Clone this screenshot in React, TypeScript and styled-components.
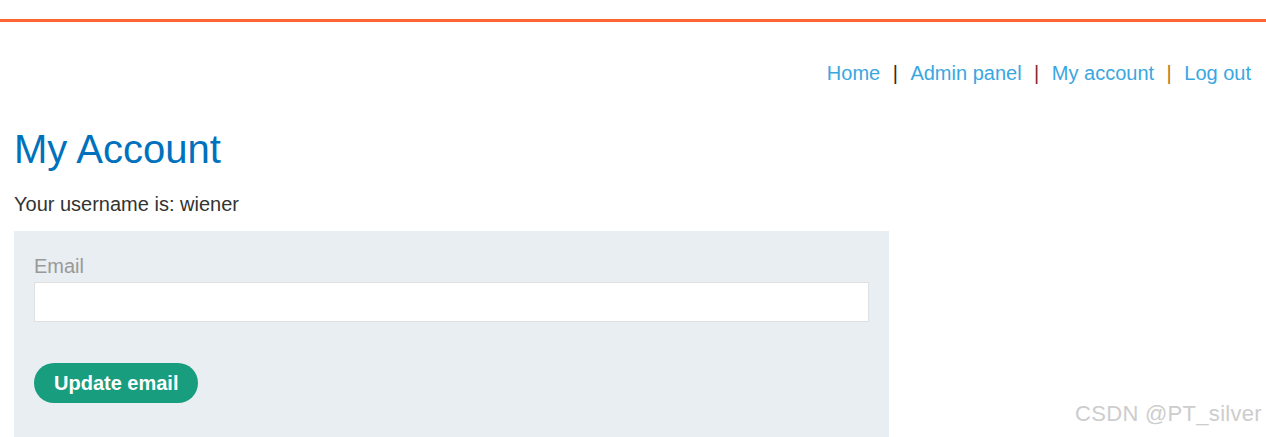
import React from "react";
import styled, { createGlobalStyle } from "styled-components";

const GlobalStyle = createGlobalStyle`
  html, body {
    margin: 0;
    padding: 0;
    background: #ffffff;
    font-family: "Liberation Sans", Arial, sans-serif;
  }
`;

const Page = styled.div`
  position: relative;
  min-height: 437px;
  overflow: hidden;
`;

const TopBar = styled.div`
  height: 19px;
  border-bottom: 3px solid #ff6633;
`;

const Nav = styled.nav`
  display: flex;
  justify-content: flex-end;
  align-items: baseline;
  margin-top: 40px;
  padding-right: 15px;
  font-size: 20px;
  line-height: 23px;
`;

const NavLink = styled.a`
  color: #3aa7e0;
  text-decoration: none;
`;

const Sep = styled.span<{ $color: string }>`
  color: ${(p) => p.$color};
  margin: 0 12.5px;
`;

const Main = styled.main`
  padding: 0 14px;
`;

const Title = styled.h1`
  margin: 41px 0 0;
  font-size: 40px;
  line-height: 46px;
  font-weight: 400;
  color: #0071bc;
`;

const Info = styled.p`
  margin: 21px 0 0;
  font-size: 20px;
  line-height: 23px;
  color: #333332;
`;

const FormPanel = styled.form`
  margin-top: 15px;
  width: 875px;
  box-sizing: border-box;
  padding: 24px 20px 34px;
  background: #e8eef1;
  display: flex;
  flex-direction: column;
  align-items: flex-start;
`;

const Label = styled.label`
  font-size: 20px;
  line-height: 23px;
  color: #999999;
`;

const Input = styled.input`
  margin-top: 4px;
  width: 100%;
  height: 40px;
  box-sizing: border-box;
  border: 1px solid #e0e0e0;
  background: #ffffff;
  outline: none;
`;

const Button = styled.button`
  margin-top: 41px;
  height: 40px;
  padding: 0 20px;
  border: none;
  border-radius: 20px;
  background: #189d7e;
  color: #ffffff;
  font-family: "Liberation Sans", Arial, sans-serif;
  font-weight: 700;
  font-size: 20px;
  cursor: pointer;
`;

const Watermark = styled.div`
  position: absolute;
  right: 4px;
  bottom: 10px;
  font-size: 22px;
  letter-spacing: 0.3px;
  color: #cdcdcd;
  font-family: "Liberation Sans", Arial, sans-serif;
`;

export default function App() {
  return (
    <Page>
      <GlobalStyle />
      <TopBar />
      <Nav>
        <NavLink href="#">Home</NavLink>
        <Sep $color="#3a2a1a">|</Sep>
        <NavLink href="#">Admin panel</NavLink>
        <Sep $color="#8a2a2a">|</Sep>
        <NavLink href="#">My account</NavLink>
        <Sep $color="#b87a1a">|</Sep>
        <NavLink href="#">Log out</NavLink>
      </Nav>
      <Main>
        <Title>My Account</Title>
        <Info>Your username is: wiener</Info>
        <FormPanel onSubmit={(e) => e.preventDefault()}>
          <Label htmlFor="email">Email</Label>
          <Input id="email" type="email" />
          <Button type="submit">Update email</Button>
        </FormPanel>
      </Main>
      <Watermark>CSDN @PT_silver</Watermark>
    </Page>
  );
}
